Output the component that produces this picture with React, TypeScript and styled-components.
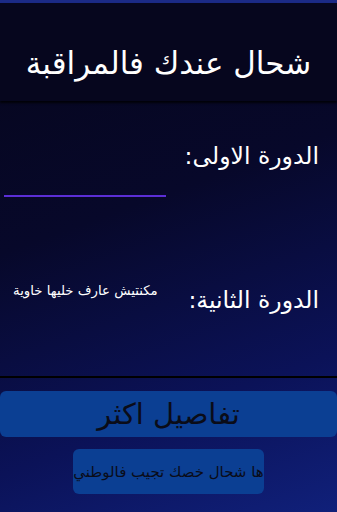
import React from "react";
import styled, { createGlobalStyle } from "styled-components";

const Global = createGlobalStyle`
  html, body { margin: 0; padding: 0; background: #06061e; }
  body { width: 337px; height: 512px; overflow: hidden; font-family: "DejaVu Sans", "Noto Sans", sans-serif; }
`;

const Screen = styled.div`
  width: 337px;
  height: 512px;
  display: flex;
  flex-direction: column;
  background: linear-gradient(160deg, #06061c 0%, #07082a 40%, #0b1258 75%, #10207a 100%);
  overflow: hidden;
`;

const StatusStrip = styled.div`
  height: 3px;
  background: #1b2a86;
`;

const Header = styled.header`
  height: 98px;
  box-sizing: border-box;
  padding-top: 22px;
  display: flex;
  align-items: center;
  justify-content: center;
  background: #06061e;
  box-shadow: 0 2px 2px rgba(0, 0, 0, 0.8);
  position: relative;
  z-index: 1;
`;

const Title = styled.h1`
  margin: 0;
  color: #ffffff;
  font-size: 31px;
  font-weight: normal;
  direction: rtl;
  white-space: nowrap;
`;

const Body = styled.main`
  flex: 1;
  display: flex;
  flex-direction: column;
`;

const Row = styled.div<{ $height: number }>`
  height: ${(p) => p.$height}px;
  display: flex;
  flex-direction: row-reverse;
  align-items: flex-start;
  justify-content: space-between;
  padding: 0 18px 0 4px;
`;

const Label = styled.div<{ $top: number }>`
  margin-top: ${(p) => p.$top}px;
  color: #ffffff;
  font-size: 23.5px;
  direction: rtl;
  white-space: nowrap;
`;

const Field = styled.div<{ $top: number }>`
  margin-top: ${(p) => p.$top}px;
  width: 162px;
  height: 2px;
  background: #5b2ed6;
`;

const Hint = styled.div<{ $top: number }>`
  margin-top: ${(p) => p.$top}px;
  margin-left: 9px;
  color: #ffffff;
  font-size: 13.3px;
  direction: rtl;
  white-space: nowrap;
`;

const Divider = styled.div`
  height: 2px;
  background: #000000;
`;

const Actions = styled.div`
  display: flex;
  flex-direction: column;
  align-items: center;
  gap: 12px;
  padding-top: 13px;
`;

const Button = styled.button<{ $wide?: boolean }>`
  border: none;
  margin: 0;
  background: #0b3f93;
  border-radius: 6px;
  color: #0a0c18;
  font-family: "DejaVu Sans", sans-serif;
  direction: rtl;
  display: flex;
  align-items: center;
  justify-content: center;
  white-space: nowrap;
  width: ${(p) => (p.$wide ? "337px" : "191px")};
  height: ${(p) => (p.$wide ? "46px" : "45px")};
  font-size: ${(p) => (p.$wide ? "29px" : "15px")};
  padding: 0;
`;

export default function App() {
  return (
    <>
      <Global />
      <Screen>
        <StatusStrip />
        <Header>
          <Title>شحال عندك فالمراقبة</Title>
        </Header>
        <Body>
          <Row $height={131}>
            <Label $top={41}>الدورة الاولى:</Label>
            <Field $top={94} />
          </Row>
          <Row $height={144}>
            <Label $top={54}>الدورة الثانية:</Label>
            <Hint $top={51}>مكنتيش عارف خليها خاوية</Hint>
          </Row>
          <Divider />
          <Actions>
            <Button $wide>تفاصيل اكثر</Button>
            <Button>ها شحال خصك تجيب فالوطني</Button>
          </Actions>
        </Body>
      </Screen>
    </>
  );
}
